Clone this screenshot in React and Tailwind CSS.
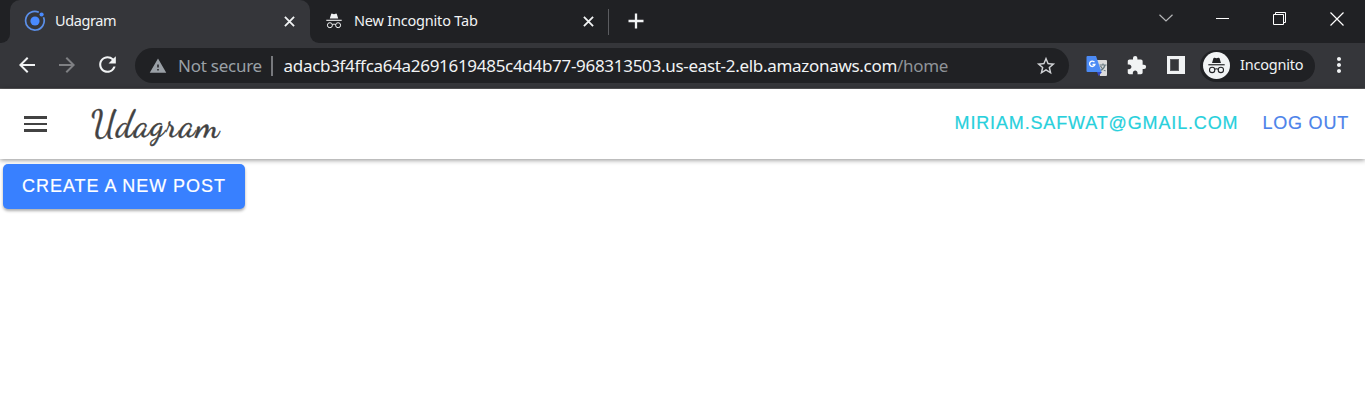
import React from "react";
import {
  MdArrowBack,
  MdArrowForward,
  MdRefresh,
  MdWarning,
  MdStarBorder,
  MdExtension,
  MdMoreVert,
} from "react-icons/md";

function Incognito({ className }) {
  return (
    <svg viewBox="0 0 16 16" className={className} fill="none" stroke="currentColor">
      <path d="M3.8 5.600 5.1 1.2c.2-.6.7-.7 1.2-.5L8 1.2l1.7-.5c.5-.2 1 0 1.2.5l1.300 4.400Z" fill="currentColor" stroke="none" />
      <path d="M.3 7.300h15.400" strokeWidth="1.100" />
      <circle cx="3.9" cy="12.2" r="2.5" strokeWidth="1" />
      <circle cx="12.1" cy="12.2" r="2.5" strokeWidth="1" />
      <path d="M6.3 11.7c1-.7 2.4-.7 3.4 0" strokeWidth="1" />
    </svg>
  );
}

function IonicLogo() {
  return (
    <svg viewBox="0 0 22 22" className="mb-px h-[22px] w-[22px] shrink-0">
      <path d="M14.800 2.300A9.300 9.300 0 1 0 19.500 7.200" fill="none" stroke="#5b8fe8" strokeWidth="1.700" />
      <circle cx="11" cy="11" r="4.600" fill="#498aff" />
      <circle cx="17.600" cy="4.500" r="2.100" fill="#498aff" />
    </svg>
  );
}

function Cross({ className }) {
  return (
    <svg viewBox="0 0 12 12" className={className} stroke="currentColor" strokeWidth="2">
      <path d="m1 1 10 10M11 1 1 11" />
    </svg>
  );
}

function Translate() {
  return (
    <svg viewBox="0 0 22 22" className="h-[22px] w-[22px] shrink-0">
      <path d="M9 5h11q1 0 1 1v14q0 1-1 1h-6Z" fill="#dcdcdc" />
      <path d="M13.500 10h7M17 8.500V10m2 0c-.6 2.700-2.500 4.600-4.500 5.500m0-4.500c1 2 2.500 3.800 5 5" fill="none" stroke="#687b82" strokeWidth="1.200" />
      <path d="M11 17h5l-3.500 4Z" fill="#3448c5" />
      <path d="M1.500 1H10l5.500 16h-14q-1 0-1-1V2q0-1 1-1Z" fill="#4c8bf5" />
      <path d="M8.500 7.200A2.700 2.700 0 1 0 8.900 9.500H6.500" fill="none" stroke="#fff" strokeWidth="1.300" />
    </svg>
  );
}

function TabStrip() {
  return (
    <div className="flex h-[43px] bg-[#202124] text-[#f1f3f4]">
      <div className="flex w-[10px] bg-[#35363a]">
        <div className="w-full rounded-br-[9px] bg-[#202124]" />
      </div>
      <div className="flex w-[300px] items-center rounded-t-[10px] bg-[#35363a] pl-[14px]">
        <IonicLogo />
        <span className="ml-[9px] w-[229px] whitespace-nowrap pb-[2px] text-[14.5px] tracking-[-0.4px]">Udagram</span>
        <Cross className="h-[11px] w-[11px]" />
      </div>
      <div className="flex w-[298px] bg-[#35363a]">
        <div className="flex w-full items-center rounded-bl-[9px] bg-[#202124] pl-4">
          <Incognito className="mb-[2px] h-4 w-4 shrink-0" />
          <span className="ml-3 w-[229px] whitespace-nowrap pb-[2px] text-[14.5px] tracking-[-0.2px]">New Incognito Tab</span>
          <Cross className="h-[11px] w-[11px]" />
        </div>
      </div>
      <div className="mt-[9px] h-[26px] w-px bg-[#5b5c60]" />
      <svg viewBox="0 0 16 16" className="ml-[19px] mt-[13px] h-4 w-4" stroke="currentColor" strokeWidth="2.300">
        <path d="M8 .5v15M.5 8h15" />
      </svg>
      <div className="ml-auto flex h-9 items-center pr-[21px]">
        <svg viewBox="0 0 14 8" className="mr-[43px] h-2 w-[14px]" fill="none" stroke="#b5b6b8" strokeWidth="1.200">
          <path d="m.5.7 6.500 6.300L13.500.7" />
        </svg>
        <div className="mr-[44px] h-px w-[13px] bg-white" />
        <svg viewBox="0 0 14 14" className="mr-[43px] mt-px h-[14px] w-[14px]" fill="none" stroke="white">
          <path d="M.5 2.500h10v10H.5ZM2.500 2V.5h10v10H11" />
        </svg>
        <svg viewBox="0 0 14 14" className="mt-px h-[14px] w-[14px]" stroke="white" strokeWidth="1.200">
          <path d="m.5.5 13 13M13.500.5l-13 13" />
        </svg>
      </div>
    </div>
  );
}

function Toolbar() {
  return (
    <div className="flex h-[46px] items-center border-b border-[#59595b] bg-[#35363a] pl-[15px] text-[#f1f3f4]">
      <MdArrowBack className="mb-[2px] h-6 w-6 shrink-0" />
      <MdArrowForward className="mb-[2px] ml-4 h-6 w-6 shrink-0 text-[#7f8083]" />
      <MdRefresh className="mb-[2px] ml-4 h-[25px] w-[25px] shrink-0" />
      <div className="ml-[15px] flex h-[35px] w-[934px] shrink-0 items-center rounded-full bg-[#202124] pl-[14px]">
        <MdWarning className="h-[18px] w-[18px] shrink-0 text-[#9aa0a6]" />
        <span className="ml-[11px] w-[93px] shrink-0 whitespace-nowrap text-[17px] tracking-[-0.25px] text-[#9aa0a6]">Not secure</span>
        <div className="h-5 w-[1.500px] shrink-0 bg-[#77797d]" />
        <div className="ml-[11px] whitespace-nowrap text-[17px] tracking-[-0.3px]">
          <span>adacb3f4ffca64a2691619485c4d4b77-968313503.us-east-2.elb.amazonaws.com</span>
          <span className="text-[#8f9398]">/home</span>
        </div>
        <MdStarBorder className="ml-auto mr-[12px] h-[22px] w-[22px] shrink-0 text-[#d0d2d5]" />
      </div>
      <div className="ml-[17px] flex items-center">
        <Translate />
        <MdExtension className="ml-[18px] h-[21px] w-[21px] shrink-0" />
        <svg viewBox="0 0 18 18" className="mb-px ml-[20px] h-[18px] w-[18px] shrink-0">
          <path fill="currentColor" fillRule="evenodd" d="M0 0h18v18H0ZM3 3v12h9V3Z" />
          <path fill="#5c5d61" d="M3 3h9v12H3Z" />
          <path fill="#35363a" d="M4 4h7v10H4Z" />
        </svg>
      </div>
      <div className="ml-[15px] flex h-8 w-[115px] shrink-0 items-center rounded-full bg-[#202124] pl-[3px]">
        <div className="flex h-[27px] w-[27px] shrink-0 items-center justify-center rounded-full bg-[#f1f3f4] text-[#202124]">
          <Incognito className="h-[17px] w-[17px]" />
        </div>
        <span className="ml-[10px] whitespace-nowrap pb-[2px] text-[14.5px] tracking-[-0.2px]">Incognito</span>
      </div>
      <MdMoreVert className="mb-px ml-[12px] h-6 w-6 shrink-0" />
    </div>
  );
}

export default function App() {
  return (
    <div className="min-h-[413px] w-[1365px] overflow-hidden bg-white font-['Noto_Sans',sans-serif]">
      <TabStrip />
      <Toolbar />
      <header className="flex h-[70px] items-center bg-white pl-6 pr-4 font-['Liberation_Sans',sans-serif] text-[18px] shadow-[0_1px_5px_rgba(0,0,0,0.45)]">
        <div className="flex w-[23px] flex-col gap-[4px]">
          <div className="h-[2.5px] bg-[#424242]" />
          <div className="h-[2.5px] bg-[#424242]" />
          <div className="h-[2.5px] bg-[#424242]" />
        </div>
        <h1 className="ml-[44px] whitespace-nowrap pt-px font-['Dancing_Script',cursive] text-[36px] leading-none tracking-[1px] text-[#424242] [-webkit-text-stroke:0.4px_#424242]">
          Udagram
        </h1>
        <a className="ml-auto whitespace-nowrap pb-[2px] tracking-[0.85px] text-[#28d0dc] [-webkit-text-stroke:0.2px_#28d0dc]">MIRIAM.SAFWAT@GMAIL.COM</a>
        <a className="ml-[24px] whitespace-nowrap pb-[2px] tracking-[0.8px] text-[#4c83ea] [-webkit-text-stroke:0.2px_#4c83ea]">LOG OUT</a>
      </header>
      <main className="pl-[3px] pt-[5px] font-['Liberation_Sans',sans-serif]">
        <button className="flex h-[45px] w-[242px] items-center justify-center whitespace-nowrap rounded-[5px] bg-[#3880ff] text-[18px] tracking-[0.95px] text-white shadow-[0_2px_3px_rgba(0,0,0,0.32)] [-webkit-text-stroke:0.2px_white]">
          CREATE A NEW POST
        </button>
      </main>
    </div>
  );
}
